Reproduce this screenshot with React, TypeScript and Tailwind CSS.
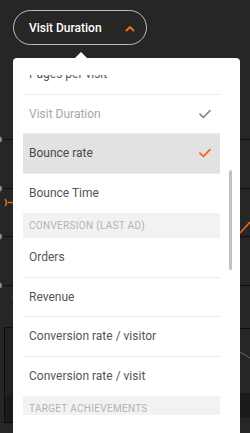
import React from "react";

const Check = ({ color }: { color: string }) => (
  <svg width="12" height="10" viewBox="0 0 12 10" fill="none">
    <path d="M1 5.2 L4.4 8.4 L11 1.6" stroke={color} strokeWidth="1.8" strokeLinecap="round" strokeLinejoin="round" />
  </svg>
);

type Row =
  | { kind: "item"; label: string; state?: "dim" | "active"; border?: boolean }
  | { kind: "header"; label: string };

const rows: Row[] = [
  { kind: "item", label: "Visit Duration", state: "dim", border: true },
  { kind: "item", label: "Bounce rate", state: "active", border: true },
  { kind: "item", label: "Bounce Time" },
  { kind: "header", label: "Conversion (last ad)" },
  { kind: "item", label: "Orders", border: true },
  { kind: "item", label: "Revenue", border: true },
  { kind: "item", label: "Conversion rate / visitor", border: true },
  { kind: "item", label: "Conversion rate / visit" },
  { kind: "header", label: "Target achievements" },
];

function Background() {
  return (
    <svg className="absolute inset-0" width="250" height="433" viewBox="0 0 250 433">
      {[139, 188, 236, 285].map((y) => (
        <g key={y}>
          <line x1="4" y1={y + 0.5} x2="14" y2={y + 0.5} stroke="#0f0f0f" strokeWidth="1" />
          <circle cx="-1" cy={y + 0.5} r="3" fill="#8a8a8a" />
        </g>
      ))}
      {[139, 188, 236, 285, 328].map((y) => (
        <line key={"r" + y} x1="240" y1={y + 0.5} x2="250" y2={y + 0.5} stroke="#0f0f0f" strokeWidth="1" />
      ))}
      <path d="M5 199 Q8 203 5 206 M8 202.5 L13 202.5" stroke="#e8661c" strokeWidth="1.6" fill="none" />
      <rect x="4.5" y="327.5" width="12" height="95" fill="#222" stroke="#0d0d0d" />
      <rect x="5" y="395" width="11" height="27" fill="#1a1a1a" />
      <path d="M240 233 L250 222" stroke="#e8661c" strokeWidth="1.6" fill="none" />
      <path d="M240 352 L250 358" stroke="#666" strokeWidth="1" fill="none" />
      <rect x="240" y="393" width="10" height="25" fill="#1b1b1b" />
      <text x="11" y="298" fill="#777" fontSize="7" fontFamily="Roboto, sans-serif">:</text>
    </svg>
  );
}

export default function App() {
  return (
    <div
      className="relative w-[250px] h-[433px] overflow-hidden bg-[#262626]"
      style={{ fontFamily: "Roboto, 'Open Sans', sans-serif" }}
    >
      <Background />
      <div className="relative flex flex-col pl-[13px] pt-[10px]">
        <button className="flex items-center justify-between w-[134px] h-[35px] rounded-full border border-[#bdbdbd] pl-[15px] pr-[11px] text-[12px] font-medium text-white">
          <span>Visit Duration</span>
          <svg width="10" height="7" viewBox="0 0 10 7" fill="none" className="mt-[1px]">
            <path d="M1.5 5.5 L5 2 L8.5 5.5" stroke="#ee6a1f" strokeWidth="2" strokeLinecap="round" strokeLinejoin="round" />
          </svg>
        </button>
        <div className="relative mt-[13px] w-[227px] h-[400px] bg-white rounded-t-[4px] pt-[17px] pl-[10px] pr-[20px]">
          <div className="absolute -top-[6px] left-[62px] w-0 h-0 border-l-[6px] border-r-[6px] border-b-[6px] border-l-transparent border-r-transparent border-b-white" />
          <div className="absolute right-[8px] top-[112px] w-[3px] h-[100px] rounded-full bg-[#c2c2c2]" />
          <div className="h-[340px] overflow-hidden">
            <div className="-mt-[20px] flex flex-col">
              <div className="h-[39.5px] border-b border-[#ececec] flex items-center px-[6px] text-[12px] text-[#555]">
                Pages per visit
              </div>
              {rows.map((r, i) =>
                r.kind === "header" ? (
                  <div
                    key={i}
                    className="h-[25px] flex items-center px-[6px] bg-[#f2f2f2] text-[10px] uppercase tracking-[0.3px] text-[#b3b3b3]"
                  >
                    {r.label}
                  </div>
                ) : (
                  <div
                    key={i}
                    className={
                      "h-[39.5px] flex items-center justify-between pl-[6px] pr-[9px] text-[12px] " +
                      (r.border ? "border-b border-[#ececec] " : "") +
                      (r.state === "active"
                        ? "bg-[#e2e2e2] text-[#4a4a4a]"
                        : r.state === "dim"
                        ? "text-[#a8a8a8]"
                        : "text-[#555]")
                    }
                  >
                    <span>{r.label}</span>
                    {r.state === "dim" && <Check color="#8e8e8e" />}
                    {r.state === "active" && <Check color="#f26322" />}
                  </div>
                )
              )}
            </div>
          </div>
        </div>
      </div>
    </div>
  );
}
